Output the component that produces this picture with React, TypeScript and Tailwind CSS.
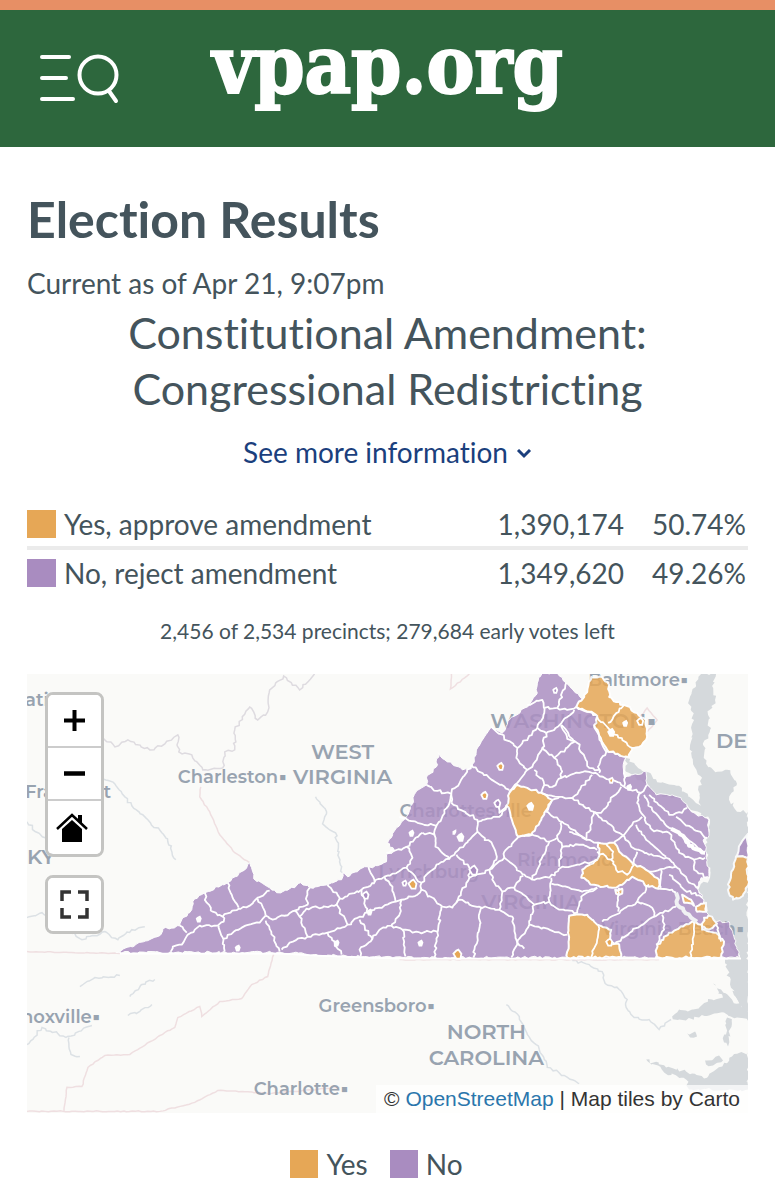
import React from "react";

type Point = [number, number];

const YES = "#e6a756";
const NO = "#a98cc0";

function parse(list: string): Point[] {
  return list.split(" ").map((pair) => pair.split(",").map(Number) as Point);
}

function wobble(x: number, y: number): number {
  const n = Math.sin(x * 12.9898 + y * 78.233) * 43758.5453;
  return (n - Math.floor(n)) * 2 - 1;
}

// Breaks long segments into short uneven steps so that borders look surveyed.
function border(list: string, closed = false, amount = 1.3): string {
  const points = parse(list);
  if (closed) points.push(points[0]);
  let d = `M${points[0][0]} ${points[0][1]}`;
  for (let i = 1; i < points.length; i++) {
    const [ax, ay] = points[i - 1];
    const [bx, by] = points[i];
    const length = Math.hypot(bx - ax, by - ay);
    const steps = Math.max(1, Math.round(length / 3));
    for (let s = 1; s <= steps; s++) {
      const t = s / steps;
      const x = ax + (bx - ax) * t;
      const y = ay + (by - ay) * t;
      const k = s === steps ? 0 : amount;
      d += `L${(x + wobble(x, y) * k).toFixed(1)} ${(y + wobble(y, x) * k).toFixed(1)}`;
    }
  }
  return closed ? d + "Z" : d;
}

const STATE =
  "116,953 135,946 148,941 160,936 163,929 180,926 182,920 192,910 193,902 205,893 228,883 239,874 250,863 253,872 254,879 268,887 277,893 295,888 301,883 310,888 328,885 342,880 343,873 348,877 365,867 369,867 373,868 387,862 387,855 395,851 388,843 397,828 407,817 413,804 416,793 427,785 427,778 437,767 439,753 448,762 463,770 472,767 475,762 477,750 485,737 492,727 503,733 510,720 528,707 538,693 538,683 543,673 558,673 567,683 580,696 598,717 607,752 627,757 624,767 625,777 647,772 648,785 657,795 673,795 682,798 688,807 695,813 710,820 709,838 705,839 707,857 710,868 710,878 702,878 698,888 705,900 707,910 713,922 730,922 741,958";

const COAST = STATE + " 406,958 367,957 317,955 282,953";

const YES_AREAS = [
  "577,707 588,692 592,677 603,677 610,685 610,697 617,702 625,705 638,713 647,720 648,737 640,747 633,748 630,757 625,757 608,750 600,737 595,725 598,716",
  "518,785 528,788 542,793 553,800 545,813 542,820 532,835 519,837 515,827 510,810 507,806 510,793",
  "599,843 615,843 620,852 633,863 650,872 660,880 659,889 650,887 633,877 623,885 613,888 595,885 582,878 583,870 598,860 600,853",
  "570,916 588,915 598,925 612,930 612,942 620,945 622,958 568,958",
  "658,945 670,933 693,922 703,925 703,930 717,933 725,942 722,958 657,958",
  "705,918 713,917 718,924 710,930 703,927",
  "697,907 707,903 707,912 698,912",
  "683,895 692,900 695,906 685,903",
  "616,890 623,889 623,894 617,894",
];

const BORDERS = [
  "205,893 207,903 213,912 223,917 224,922 218,926 200,926 195,930 188,935 182,945 173,947 171,952",
  "228,883 232,895 239,908",
  "223,917 239,909 250,906 258,898 270,891",
  "180,926 187,933",
  "219,926 223,938 225,952",
  "224,939 242,928 260,923 266,916",
  "258,899 266,916",
  "266,916 273,920 295,911 308,905 307,897 310,888",
  "266,921 280,952",
  "295,911 300,917 308,937",
  "282,950 290,943 308,937 328,933 348,925 368,913",
  "300,917 307,909 337,905 340,898 328,885",
  "337,905 348,925",
  "340,899 362,890 385,877 407,868 413,858 407,847 423,833",
  "369,867 375,882",
  "362,890 367,913",
  "385,877 393,887 396,902 368,913",
  "396,902 402,900 418,895 422,890",
  "402,900 400,915 392,926 380,930 373,939 360,950 361,957",
  "360,920 373,939",
  "328,933 342,955",
  "392,926 403,930 406,957",
  "387,853 395,851 407,847",
  "400,817 418,823 437,826 449,806 452,795",
  "423,833 435,835 437,826",
  "435,835 436,847 450,859 455,855 478,832 478,820 452,803",
  "450,859 437,865 427,875 422,883 407,868",
  "422,883 422,890 443,907 453,908 460,900 480,907 500,910 513,917 518,943 512,958",
  "442,907 438,933 435,958",
  "403,930 413,933 438,932",
  "482,907 478,937 474,958",
  "457,855 470,868 470,878 457,903",
  "470,878 490,870 505,858 525,875 533,880 550,878 563,867 580,865 598,860",
  "490,870 495,883 503,892 500,910",
  "503,892 515,888 524,876",
  "478,832 493,845 497,860 490,870",
  "478,822 500,817 507,806",
  "519,837 505,852 505,858",
  "519,837 533,835 550,842 533,880",
  "547,812 563,822 580,835 587,840",
  "550,842 558,838 563,822",
  "558,838 563,847 580,845 598,850",
  "563,847 560,867",
  "515,888 535,905 550,902 552,878",
  "552,884 570,888 583,892 598,888",
  "535,905 530,925 518,943 525,949",
  "530,925 568,935",
  "550,902 560,910 578,913 582,897 598,888",
  "599,925 598,940 592,958",
  "695,923 692,958",
  "598,852 612,860 617,870 628,875 635,865",
  "607,844 614,852 612,860",
  "595,812 587,840 570,832",
  "587,840 599,843",
  "595,812 620,833 632,847 650,855 667,858 678,868 690,883 700,888",
  "625,787 642,793 638,803 642,813 653,830 670,833 680,853 695,860 706,858",
  "645,795 653,810 670,828 683,835 705,853",
  "650,795 658,803 670,815 683,813 688,808",
  "677,817 695,830 708,838",
  "615,843 625,835 633,825 643,817",
  "637,825 647,840 667,857",
  "633,865 638,852",
  "650,872 677,867",
  "659,889 673,890 677,893",
  "662,870 662,888",
  "670,875 685,890 703,898",
  "620,888 619,912",
  "650,885 638,902 603,922",
  "638,902 653,908 655,917 613,945",
  "677,907 655,917",
  "663,915 665,930 657,945",
  "717,925 722,942",
  "695,860 695,870 708,878",
  "577,707 597,715",
  "625,705 609,723",
  "598,717 613,732 633,748",
  "595,725 607,752 600,765 600,773",
  "562,725 568,739 578,743 590,768 600,770",
  "562,778 580,773 590,772 613,780 625,787",
  "625,770 625,787",
  "593,775 573,798",
  "622,787 602,813 595,812",
  "542,793 560,797 573,798 595,812",
  "642,793 648,785",
  "492,727 518,748 517,758 528,770 518,783 510,792",
  "472,765 490,778 510,790",
  "472,765 452,793 452,803",
  "427,785 438,791 452,794",
  "518,748 538,728 545,713 543,700 528,705",
  "545,708 558,708 567,683",
  "558,708 568,710 577,707",
  "538,728 547,733 555,730 575,710",
  "547,733 543,748 533,767 528,770",
  "543,748 555,758 575,742 562,725",
  "555,758 562,770 562,778 553,787 545,785 535,770",
  "545,785 542,793",
  "497,803 500,813 507,806",
  "553,800 560,797",
  "547,812 553,800",
];

const TOWNS: { at: Point; r: number; fill: string }[] = [
  { at: [556, 691], r: 2, fill: NO },
  { at: [501, 767], r: 3, fill: YES },
  { at: [485, 796], r: 3, fill: YES },
  { at: [531, 807], r: 3, fill: "#fff" },
  { at: [498, 804], r: 3, fill: NO },
  { at: [412, 834], r: 2, fill: "#fff" },
  { at: [413, 885], r: 4, fill: YES },
  { at: [405, 884], r: 2, fill: NO },
  { at: [458, 955], r: 4, fill: YES },
  { at: [421, 944], r: 2, fill: "#fff" },
  { at: [337, 944], r: 2, fill: "#fff" },
  { at: [366, 896], r: 3, fill: NO },
  { at: [370, 913], r: 2, fill: "#fff" },
  { at: [199, 920], r: 2, fill: "#fff" },
  { at: [238, 949], r: 2, fill: "#fff" },
  { at: [461, 838], r: 3, fill: "#fff" },
  { at: [455, 833], r: 1, fill: "#fff" },
  { at: [474, 871], r: 4, fill: NO },
  { at: [626, 724], r: 2, fill: "#fff" },
  { at: [612, 733], r: 3, fill: "#fff" },
  { at: [641, 722], r: 3, fill: YES },
  { at: [610, 943], r: 3, fill: YES },
  { at: [612, 781], r: 2, fill: YES },
  { at: [630, 788], r: 2, fill: "#fff" },
];

function town([x, y]: Point, r: number): string {
  return `M${x - r} ${y - 1}L${x - 1} ${y - r}L${x + 1} ${y - r - 1}L${x + r} ${y - 1}L${x + r - 1} ${y + r}L${x - 1} ${y + r}Z`;
}

const RIVERS = [
  "102,737 115,747 128,740 150,750 165,744 178,735 179,752 192,755 203,770 223,768 225,752 235,750 235,730 250,707 258,720 268,712 270,690 284,676 300,690 315,674",
  "103,779 115,784 125,797 132,806 148,820 162,833 168,842 176,860",
  "27,822 38,833 48,840",
  "27,918 42,913 60,924 82,940 105,932 118,940 132,930 145,927",
  "27,1045 42,1028 66,1038 92,1026",
  "69,1038 71,1055 80,1057",
  "316,797 327,812 323,824 336,833 340,862 343,873",
  "573,961 590,965 603,972 606,984 620,990 628,1000 627,1008 635,1018 650,1020 660,1030 672,1020",
  "507,1005 520,1017 528,1035 540,1050 548,1068 565,1076 580,1084",
  "80,987 95,978 120,976",
  "130,997 142,985 155,980",
  "128,1016 140,1012 152,1005",
];

const STATE_LINES = [
  "201,787 200,797 210,812 220,835 235,853 250,863",
  "27,952 120,954",
  "27,1112 160,1112 195,1103 218,1091 270,1094 340,1088",
  "64,1112 67,1088 82,1087 88,1068 105,1056 130,1055 165,1033 175,1028 178,1018 200,1007 202,1017 220,1002 242,999 252,985 268,977 274,955",
  "452,674 451,689 470,674",
  "400,960 660,960",
  "640,718 648,708 658,720 648,732",
];

const WATER = [
  "702,674 717,674 713,686 716,700 709,715 711,730 704,745 707,764 718,772 728,770 738,784 730,800 738,812 749,812 749,1022 741,1004 731,985 728,958 741,958 712,925 706,905 699,890 711,878 706,845 711,820 690,808 680,798 655,794 648,784 627,772 627,758 636,765 647,772 662,783 680,786 694,800 702,806 699,790 703,778 694,764 691,745 695,720 690,700",
  "673,1017 680,1010 693,1010 713,1000 724,998 714,984 722,990 733,1000 749,1012 749,1021 738,1018 725,1013 700,1018 680,1020",
  "647,1060 667,1068 693,1074 705,1079 717,1070 733,1057 749,1053 749,1090 690,1090 687,1080 665,1073",
  "728,1018 733,1020 729,1047 725,1043",
  "688,1034 696,1032 698,1037 691,1038",
  "706,1061 714,1060 720,1056 724,1061 714,1066 707,1065",
];

const LABELS: { text: string; x: number; y: number; size: number; anchor?: "middle" | "start" }[] = [
  { text: "ati", x: 25, y: 706, size: 18 },
  { text: "Frankfort", x: 25, y: 798, size: 18 },
  { text: "KY", x: 27, y: 864, size: 21 },
  { text: "Charleston▪", x: 178, y: 783, size: 18 },
  { text: "WEST", x: 343, y: 759, size: 21, anchor: "middle" },
  { text: "VIRGINIA", x: 343, y: 784, size: 21, anchor: "middle" },
  { text: "WASHINGTON▪", x: 491, y: 728, size: 21 },
  { text: "Baltimore▪", x: 589, y: 686, size: 18 },
  { text: "DE", x: 717, y: 748, size: 21 },
  { text: "Charlottesville", x: 400, y: 817, size: 18 },
  { text: "Lynchburg", x: 379, y: 878, size: 18 },
  { text: "Richmond", x: 518, y: 866, size: 18 },
  { text: "VIRGINIA", x: 482, y: 909, size: 21 },
  { text: "Virginia Beach▪", x: 602, y: 935, size: 18 },
  { text: "Greensboro▪", x: 319, y: 1012, size: 18 },
  { text: "NORTH", x: 487, y: 1040, size: 21, anchor: "middle" },
  { text: "CAROLINA", x: 487, y: 1066, size: 21, anchor: "middle" },
  { text: "noxville▪", x: 21, y: 1023, size: 18 },
  { text: "Charlotte▪", x: 254, y: 1096, size: 18 },
];

function VirginiaMap() {
  return (
    <svg
      viewBox="27 674 722 440"
      className="block w-full"
      role="img"
      aria-label="Virginia results by locality"
    >
      <rect x="27" y="674" width="722" height="440" fill="#fafaf8" />
      {WATER.map((d) => (
        <path key={d} d={border(d, true, 2)} fill="#d5d9dc" />
      ))}
      <path d={border("728,960 736,985 746,1008", false, 2)} fill="none" stroke="#d5d9dc" strokeWidth="4" />
      {RIVERS.map((d, i) => (
        <path key={d} d={border(d)} fill="none" stroke={i === 0 ? "#dedbe0" : "#dce1e5"} strokeWidth="1.5" />
      ))}
      {STATE_LINES.map((d) => (
        <path key={d} d={border(d, false, 0.5)} fill="none" stroke="#efdfe1" strokeWidth="1.5" />
      ))}
      <g className="font-['Montserrat','Inter',sans-serif] font-semibold" fill="#98a3b0">
        {LABELS.map((l) => (
          <text key={`${l.text}${l.y}`} x={l.x} y={l.y} fontSize={l.size} textAnchor={l.anchor ?? "start"}>
            {l.text}
          </text>
        ))}
      </g>
      <g opacity="0.85" strokeLinejoin="round">
        <path d={border(COAST, true)} fill="#ac90c2" stroke="#fff" strokeWidth="1" />
        {YES_AREAS.map((d) => (
          <path key={d} d={border(d, true)} fill={YES} stroke="#fff" strokeWidth="2" />
        ))}
        <path d={border("749,834 741,845 737,857 749,858", true)} fill={NO} stroke="#fff" strokeWidth="2" />
        <path d={border("737,857 732,875 729,890 734,900 744,896 749,886 749,858", true)} fill={YES} stroke="#fff" strokeWidth="2" />
      </g>
      <g fill="none" stroke="#fff" strokeWidth="1.8" strokeLinejoin="round">
        {BORDERS.map((d) => (
          <path key={d} d={border(d)} />
        ))}
        <path d={border("672,829 684,836 690,846 706,853")} strokeWidth="4" />
        <path d={border("677,893 678,905 692,918 698,922")} strokeWidth="4" stroke="#f0f1f3" />
        <path d="M120 954H282L317 956L367 958L406 959H742" />
      </g>
      {TOWNS.map((t) => (
        <path key={t.at.join()} d={town(t.at, t.r)} fill={t.fill} stroke="#fff" strokeWidth="1.8" />
      ))}
    </svg>
  );
}

function MenuSearchIcon() {
  return (
    <svg viewBox="0 0 80 52" className="h-[52px] w-20" fill="none" stroke="#fff" strokeLinecap="round" aria-hidden="true">
      <path d="M3 5H30M3 26H27M3 47H34" strokeWidth="4" />
      <circle cx="59" cy="23" r="18.500" strokeWidth="4" />
      <path d="M70 39L77 49" strokeWidth="4" />
    </svg>
  );
}

function HomeIcon() {
  return (
    <svg viewBox="0 0 32 30" className="mr-1.5 h-[30px] w-8" aria-hidden="true">
      <path d="M6 16L16 7L26 16V29H6Z" />
      <path d="M1 16L16 2L31 16" fill="none" stroke="#000" strokeWidth="2.5" />
      <path d="M22 2H26V12L22 8Z" />
    </svg>
  );
}

const CONTROL = "flex w-full items-center justify-center bg-white text-black";

function MapControls() {
  return (
    <div className="absolute left-[18px] top-[18px] flex w-[59px] flex-col gap-[18px]">
      <div className="overflow-hidden rounded-lg border-3 border-[#c4c4c2]">
        <button type="button" aria-label="Zoom in" className={`${CONTROL} h-[53px] border-b-2 border-[#ccc]`}>
          <svg viewBox="0 0 21 21" className="h-[21px] w-[21px]" aria-hidden="true">
            <path d="M0 10.5H21M10.5 0V21" stroke="#000" strokeWidth="4" />
          </svg>
        </button>
        <button type="button" aria-label="Zoom out" className={`${CONTROL} h-[53px] border-b-2 border-[#ccc]`}>
          <svg viewBox="0 0 21 21" className="h-[21px] w-[21px]" aria-hidden="true">
            <path d="M0 10.5H21" stroke="#000" strokeWidth="4.5" />
          </svg>
        </button>
        <button type="button" aria-label="Reset view" className={`${CONTROL} h-[53px]`}>
          <HomeIcon />
        </button>
      </div>
      <div className="overflow-hidden rounded-lg border-3 border-[#c4c4c2]">
        <button type="button" aria-label="Full screen" className={`${CONTROL} h-[53px]`}>
          <svg viewBox="0 0 29 29" className="h-[29px] w-[29px]" fill="none" stroke="#333" strokeWidth="3.5" aria-hidden="true">
            <path d="M11 2H2V11M18 2H27V11M27 18V27H18M11 27H2V18" />
          </svg>
        </button>
      </div>
    </div>
  );
}

const RESULTS = [
  { label: "Yes, approve amendment", votes: "1,390,174", share: "50.74%", swatch: "bg-[#e6a756]" },
  { label: "No, reject amendment", votes: "1,349,620", share: "49.26%", swatch: "bg-[#a98cc0]" },
];

export default function App() {
  return (
    <div className="bg-white pb-5 font-['Lato',sans-serif] text-[#44545c] [font-variant-ligatures:none]">
      <header className="grid h-[147px] grid-cols-[1fr_auto_1fr] items-start border-t-10 border-[#e78f65] bg-[#2d673d]">
        <button type="button" aria-label="Menu and search" className="mt-[42px] ml-[39px] justify-self-start">
          <MenuSearchIcon />
        </button>
        <a
          href="/"
          className="mt-1 font-['DejaVu_Serif_Condensed','DejaVu_Serif',serif] text-[80px] leading-[102px] font-bold text-white [-webkit-text-stroke:2px_white]"
        >
          vpap.org
        </a>
      </header>

      <main className="px-[27px]">
        <h1 className="pt-[42px] text-[50px] leading-[60px] font-bold">Election Results</h1>
        <p className="mt-[15px] text-[28px] leading-[38px]">Current as of Apr 21, 9:07pm</p>
        <h2 className="mx-auto max-w-[600px] pt-[3px] text-center text-[43px] leading-[56px]">
          Constitutional Amendment: Congressional Redistricting
        </h2>
        <div className="mt-4 text-center">
          <button type="button" className="inline-flex items-center gap-2 text-[28px] leading-[38px] text-[#1b3f7d]">
            See more information
            <svg viewBox="0 0 16 10" className="mt-1 h-[10px] w-4" fill="none" stroke="currentColor" strokeWidth="3" aria-hidden="true">
              <path d="M2 1L8 7L14 1" />
            </svg>
          </button>
        </div>

        <table className="mt-[30px] w-full border-collapse text-[28px] leading-[38px]">
          <tbody>
            {RESULTS.map((r) => (
              <tr key={r.label} className="h-[47px] border-b-4 border-[#ebebeb] last:border-b-0">
                <th scope="row" className="p-0 text-left font-normal">
                  <span className="flex items-center gap-2">
                    <span className={`h-7 w-[29px] ${r.swatch}`} />
                    {r.label}
                  </span>
                </th>
                <td className="w-[150px] p-0 text-right">{r.votes}</td>
                <td className="w-[124px] p-0 pr-0.5 text-right">{r.share}</td>
              </tr>
            ))}
          </tbody>
        </table>
        <p className="mt-5 text-center text-[21px] leading-[32px]">
          2,456 of 2,534 precincts; 279,684 early votes left
        </p>

        <div className="relative mt-[27px] overflow-hidden">
          <VirginiaMap />
          <MapControls />
          <p className="absolute right-0 bottom-0 bg-white/70 px-2 font-['Liberation_Sans',sans-serif] text-[21px] leading-[28px] text-[#333]">
            © <a href="https://www.openstreetmap.org" className="text-[#2a76ac]">OpenStreetMap</a> | Map tiles by Carto
          </p>
        </div>

        <ul className="mt-8 flex justify-center gap-[22px] pr-[22px] text-[28px] leading-[38px]">
          <li className="flex items-center gap-2">
            <span className="size-7 bg-[#e6a756]" />
            Yes
          </li>
          <li className="flex items-center gap-2">
            <span className="size-7 bg-[#a98cc0]" />
            No
          </li>
        </ul>
      </main>
    </div>
  );
}
